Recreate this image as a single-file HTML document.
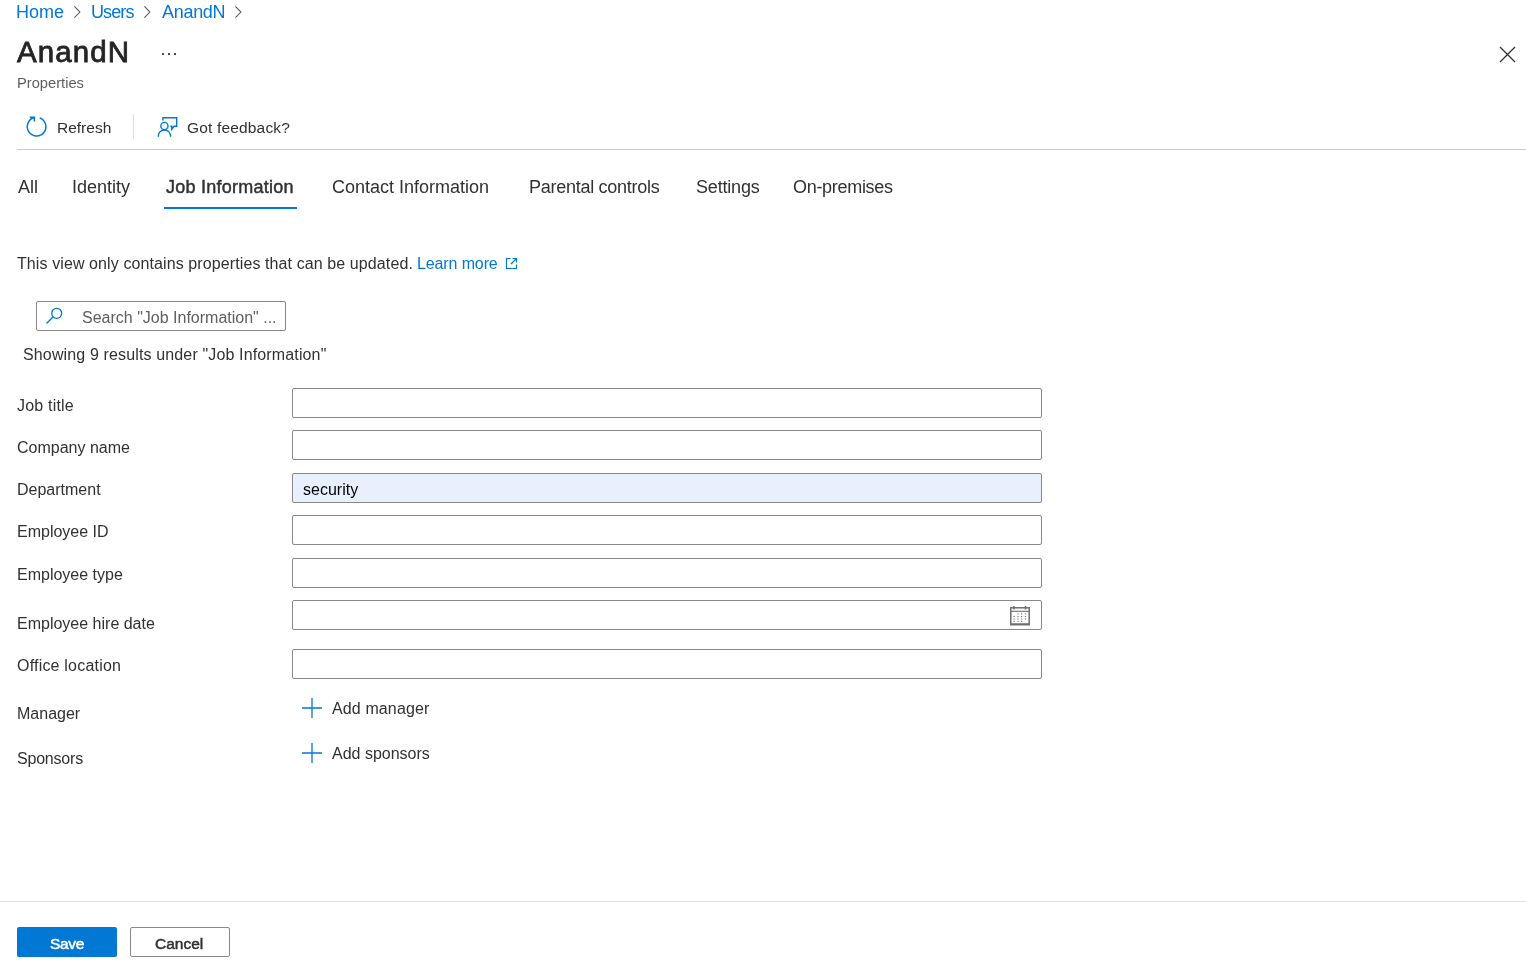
<!DOCTYPE html>
<html><head><meta charset="utf-8">
<style>
html,body{margin:0;padding:0;background:#fff;width:1526px;height:967px;overflow:hidden;position:relative;font-family:"Liberation Sans",sans-serif;color:#323130}
.a{position:absolute;white-space:nowrap}
.t{position:absolute;white-space:nowrap;line-height:1}
.bc{color:#0078d4;font-size:18px;line-height:18px}
.chev{position:absolute}
.tab{font-size:18px;line-height:18px;color:#323130}
.lbl{font-size:16px;line-height:16px;color:#323130}
.inp{position:absolute;left:292px;width:748px;height:28px;border:1px solid #8a8886;border-radius:2px;background:#fff}
.hr{position:absolute;height:1px;background:#e1dfdd}
#wrap{position:absolute;left:0;top:0;width:1526px;height:967px;will-change:transform}</style></head><body><div id="wrap">

<!-- breadcrumb -->
<div class="t bc" style="left:16px;top:3px">Home</div>
<svg class="chev" style="left:72px;top:5px" width="10" height="14" viewBox="0 0 10 14"><path d="M2.4 1.3 L7.9 7.1 L2.4 12.7" fill="none" stroke="#605e5c" stroke-width="1.1"/></svg>
<div class="t bc" style="left:91px;top:3px;letter-spacing:-0.9px">Users</div>
<svg class="chev" style="left:142px;top:5px" width="10" height="14" viewBox="0 0 10 14"><path d="M2.4 1.3 L7.9 7.1 L2.4 12.7" fill="none" stroke="#605e5c" stroke-width="1.1"/></svg>
<div class="t bc" style="left:162px;top:3px;letter-spacing:-0.3px">AnandN</div>
<svg class="chev" style="left:233px;top:5px" width="10" height="14" viewBox="0 0 10 14"><path d="M2.4 1.3 L7.9 7.1 L2.4 12.7" fill="none" stroke="#605e5c" stroke-width="1.1"/></svg>

<!-- title -->
<div class="t" style="left:17px;top:37.4px;font-size:29.5px;line-height:29.5px;-webkit-text-stroke:0.8px #242424;color:#242424;letter-spacing:1.1px">AnandN</div>
<div class="a" style="left:162px;top:53px;width:2px;height:2px;background:#3b3a39;border-radius:0.5px"></div>
<div class="a" style="left:168px;top:53px;width:2px;height:2px;background:#3b3a39;border-radius:0.5px"></div>
<div class="a" style="left:174px;top:53px;width:2px;height:2px;background:#3b3a39;border-radius:0.5px"></div>
<div class="t" style="left:17px;top:75.5px;font-size:14.7px;line-height:14.7px;color:#605e5c">Properties</div>

<!-- close -->
<svg class="a" style="left:1499px;top:46px" width="17" height="17" viewBox="0 0 17 17"><path d="M1 1 L16 16 M16 1 L1 16" stroke="#323130" stroke-width="1.3" fill="none"/></svg>

<!-- toolbar -->
<svg class="a" style="left:22px;top:112px" width="30" height="30" viewBox="0 0 30 30">
  <path d="M17.7 5.9 A9.3 9.3 0 1 1 12.5 5.6" fill="none" stroke="#0078d4" stroke-width="1.5"/>
  <path d="M7.8 5.3 H12.4 V9.6" fill="none" stroke="#0078d4" stroke-width="1.5"/>
</svg>
<div class="t" style="left:57px;top:120px;font-size:15.5px;line-height:15.5px">Refresh</div>
<div class="a" style="left:133px;top:114px;width:1px;height:25px;background:#e1dfdd"></div>
<svg class="a" style="left:152px;top:112px" width="30" height="30" viewBox="0 0 30 30">
  <path d="M18.3 14.3 H19.7 V17.4 L21.9 14.3 H24.7 V5.7 H10.9 V8.6" fill="none" stroke="#0078d4" stroke-width="1.4"/>
  <circle cx="12.4" cy="14" r="3.6" fill="none" stroke="#0078d4" stroke-width="1.4"/>
  <path d="M6.3 24.8 C6.3 20.5 9 18 12.4 18 C15.8 18 18.6 20.5 18.6 24.8" fill="none" stroke="#0078d4" stroke-width="1.4"/>
</svg>
<div class="t" style="left:187px;top:120px;font-size:15.5px;line-height:15.5px;letter-spacing:0.17px">Got feedback?</div>
<div class="hr" style="left:17px;top:149px;width:1509px;background:#cbcbcb"></div>

<!-- tabs -->
<div class="t tab" style="left:18px;top:178px">All</div>
<div class="t tab" style="left:72px;top:178px">Identity</div>
<div class="t tab" style="left:166px;top:178px;-webkit-text-stroke:0.45px #323130;letter-spacing:0.25px">Job Information</div>
<div class="t tab" style="left:332px;top:178px">Contact Information</div>
<div class="t tab" style="left:529px;top:178px;letter-spacing:-0.27px">Parental controls</div>
<div class="t tab" style="left:696px;top:178px;letter-spacing:-0.18px">Settings</div>
<div class="t tab" style="left:793px;top:178px;letter-spacing:-0.3px">On-premises</div>
<div class="a" style="left:164px;top:207px;width:133px;height:2px;background:#0078d4"></div>

<!-- info -->
<div class="t lbl" style="left:17px;top:256px;letter-spacing:0.1px">This view only contains properties that can be updated.</div>
<div class="t lbl" style="left:417px;top:256.2px;color:#0078d4;letter-spacing:-0.12px">Learn more</div>
<svg class="a" style="left:505px;top:257px" width="13" height="13" viewBox="0 0 13 13">
  <path d="M5.5 1.5 H1.5 V11.5 H11.5 V7.5" fill="none" stroke="#0078d4" stroke-width="1.2"/>
  <path d="M7.5 1.5 H11.5 V5.5 M11.5 1.5 L6 7" fill="none" stroke="#0078d4" stroke-width="1.2"/>
</svg>

<!-- search -->
<div class="a" style="left:36px;top:301px;width:248px;height:28px;border:1px solid #8a8886;border-radius:2px"></div>
<svg class="a" style="left:44px;top:306px" width="20" height="20" viewBox="0 0 20 20">
  <circle cx="12.7" cy="7.3" r="5" fill="none" stroke="#0078d4" stroke-width="1.3"/>
  <path d="M9.2 10.8 L2.5 17.5" fill="none" stroke="#0078d4" stroke-width="1.3"/>
</svg>
<div class="t" style="left:82px;top:310px;font-size:16px;line-height:16px;color:#605e5c">Search "Job Information" ...</div>
<div class="t lbl" style="left:23px;top:347px;letter-spacing:0.14px">Showing 9 results under "Job Information"</div>

<!-- form -->
<div class="t lbl" style="left:17px;top:397.6px;letter-spacing:0.2px">Job title</div>
<div class="inp" style="top:388px"></div>
<div class="t lbl" style="left:17px;top:439.6px">Company name</div>
<div class="inp" style="top:430px"></div>
<div class="t lbl" style="left:17px;top:482px">Department</div>
<div class="inp" style="top:473px;background:#e8f0fe"></div>
<div class="t lbl" style="left:303px;top:482px;color:#000">security</div>
<div class="t lbl" style="left:17px;top:524px">Employee ID</div>
<div class="inp" style="top:515px"></div>
<div class="t lbl" style="left:17px;top:567px">Employee type</div>
<div class="inp" style="top:558px"></div>
<div class="t lbl" style="left:17px;top:616.4px">Employee hire date</div>
<div class="inp" style="top:600px"></div>
<svg class="a" style="left:1009px;top:605px" width="22" height="22" viewBox="0 0 22 22">
  <rect x="1.8" y="2.8" width="18.4" height="16.9" fill="none" stroke="#6e6e6e" stroke-width="1.5"/>
  <path d="M1.5 6.3 H20.5" stroke="#6e6e6e" stroke-width="1.1"/>
  <path d="M5 1 V4.5 M16.5 1 V4.5" stroke="#6e6e6e" stroke-width="1.5"/>
  <path d="M1.5 19 H20.5" stroke="#6e6e6e" stroke-width="1.5"/>
  <rect x="8.4" y="8.4" width="1.2" height="1" fill="#6e6e6e"/><rect x="12.0" y="8.4" width="1.2" height="1" fill="#6e6e6e"/><rect x="15.9" y="8.4" width="1.2" height="1" fill="#6e6e6e"/><rect x="4.5" y="11.0" width="1.2" height="1" fill="#6e6e6e"/><rect x="8.4" y="11.0" width="1.2" height="1" fill="#6e6e6e"/><rect x="12.0" y="11.0" width="1.2" height="1" fill="#6e6e6e"/><rect x="15.9" y="11.0" width="1.2" height="1" fill="#6e6e6e"/><rect x="4.5" y="13.5" width="1.2" height="1" fill="#6e6e6e"/><rect x="8.4" y="13.5" width="1.2" height="1" fill="#6e6e6e"/><rect x="12.0" y="13.5" width="1.2" height="1" fill="#6e6e6e"/><rect x="15.9" y="13.5" width="1.2" height="1" fill="#6e6e6e"/><rect x="4.5" y="15.9" width="1.2" height="1" fill="#6e6e6e"/><rect x="8.4" y="15.9" width="1.2" height="1" fill="#6e6e6e"/><rect x="12.0" y="15.9" width="1.2" height="1" fill="#6e6e6e"/>
</svg>
<div class="t lbl" style="left:17px;top:658px;letter-spacing:0.2px">Office location</div>
<div class="inp" style="top:649px"></div>
<div class="t lbl" style="left:17px;top:705.6px">Manager</div>
<svg class="a" style="left:301.4px;top:697px" width="22" height="22" viewBox="0 0 22 22"><path d="M1 11 H21 M11 1 V21" stroke="#0078d4" stroke-width="1.3"/></svg>
<div class="t lbl" style="left:332px;top:701px;letter-spacing:0.12px">Add manager</div>
<div class="t lbl" style="left:17px;top:750.5px;letter-spacing:-0.2px">Sponsors</div>
<svg class="a" style="left:301.4px;top:742px" width="22" height="22" viewBox="0 0 22 22"><path d="M1 11 H21 M11 1 V21" stroke="#0078d4" stroke-width="1.3"/></svg>
<div class="t lbl" style="left:332px;top:746px">Add sponsors</div>

<!-- footer -->
<div class="hr" style="left:0;top:901px;width:1526px;background:#e1dfdd"></div>
<div class="a" style="left:17px;top:927px;width:100px;height:30px;background:#0078d4;border-radius:2px"></div>
<div class="t" style="left:50px;top:936px;font-size:15.5px;line-height:15.5px;-webkit-text-stroke:0.5px #fff;color:#fff;letter-spacing:-0.35px">Save</div>
<div class="a" style="left:130px;top:927px;width:98px;height:28px;border:1px solid #8a8886;border-radius:2px;background:#fff"></div>
<div class="t" style="left:155px;top:936px;font-size:15.5px;line-height:15.5px;-webkit-text-stroke:0.5px #323130;color:#323130">Cancel</div>

</div></body></html>
